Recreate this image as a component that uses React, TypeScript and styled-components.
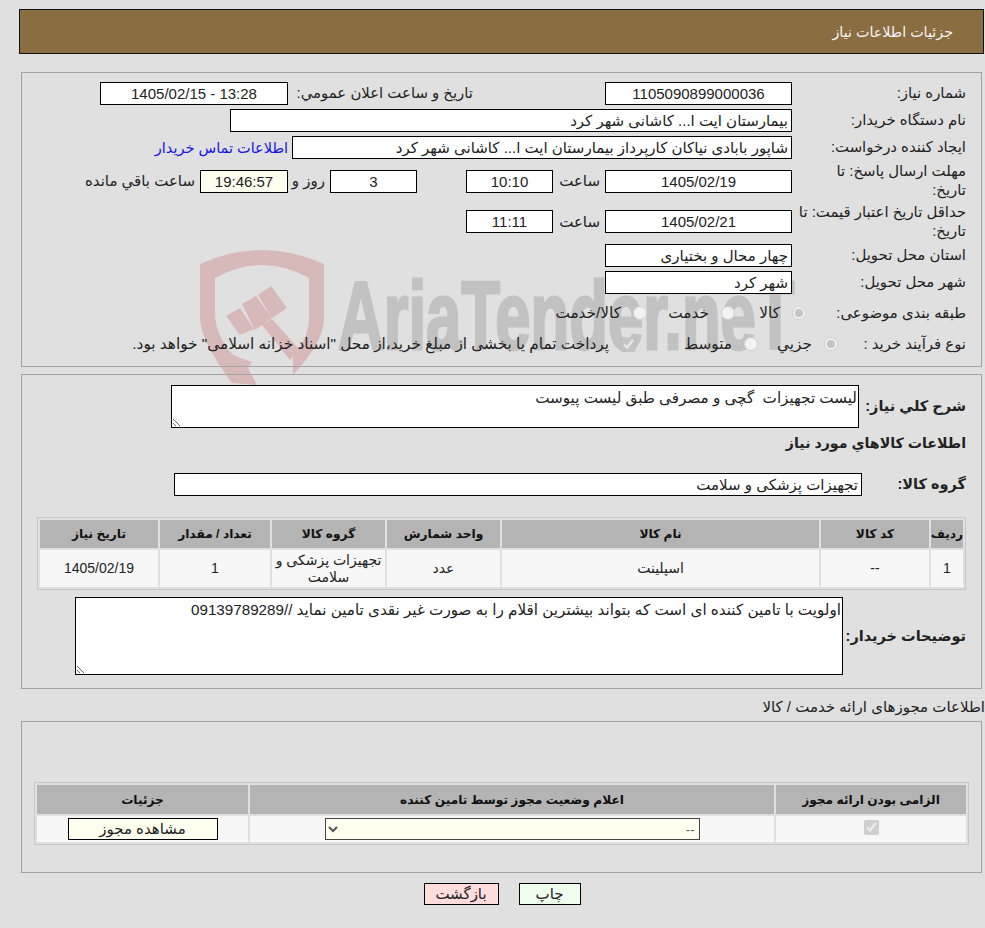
import styled, {createGlobalStyle} from "styled-components";

const FONT = `"Liberation Sans", "DejaVu Sans", sans-serif`;

const GlobalStyle = createGlobalStyle`
  html {
    background: #e0e0e0;
  }
  body {
    margin: 0;
    padding: 0;
    font-family: ${FONT};
    font-size: 15px;
    color: #222;
  }
`;

const Page = styled.div`
  direction: rtl;
  width: 985px;
  height: 928px;
  padding-top: 9px;
  box-sizing: border-box;
  overflow: hidden;
`;

const Watermark = styled.div`
  position: absolute;
  left: 200px;
  top: 250px;
  width: 600px;
  height: 140px;
  z-index: -1;
  direction: ltr;
`;

const WatermarkText = styled.span`
  position: absolute;
  left: 138px;
  top: 18px;
  font-weight: 700;
  font-size: 96px;
  line-height: 96px;
  color: #c2c2c2;
  -webkit-text-stroke: 3px #c2c2c2;
  white-space: nowrap;
  transform: scaleX(0.66);
  transform-origin: left top;
`;

const Header = styled.div`
  display: flex;
  align-items: center;
  height: 43px;
  margin: 0 1px 0 19px;
  padding-right: 30px;
  background: #8b6d42;
  border: 1px solid #111;
  color: #f4f4f4;
  font-size: 14.3px;
`;

const Panel = styled.div<{$pt: number; $px?: number; $h: number}>`
  height: ${p => p.$h}px;
  box-sizing: border-box;
  margin: 0 3px 0 21px;
  padding: ${p => p.$pt}px ${p => p.$px ?? 15}px 0;
  border: 1px solid #a2a2a2;
`;

const Row = styled.div<{$h: number}>`
  display: flex;
  align-items: center;
  height: ${p => p.$h}px;
`;

const Label = styled.div<{$w: number}>`
  flex: none;
  width: ${p => p.$w}px;
  font-size: 14.9px;
  line-height: 19px;
  white-space: nowrap;
`;

const StrongLabel = styled(Label)`
  font-weight: 700;
  font-size: 14.5px;
`;

const Heading = styled.div`
  font-weight: 700;
  font-size: 14.2px;
  height: 45px;
  line-height: 31px;
`;

const Field = styled.div<{$w: number; $digits?: boolean; $bg?: string; $gap?: number}>`
  flex: none;
  box-sizing: border-box;
  width: ${p => p.$w}px;
  height: 23px;
  margin-left: ${p => p.$gap ?? 0}px;
  padding: 0 3px;
  border: 1px solid #000;
  background: ${p => p.$bg ?? "#fff"};
  line-height: 21px;
  white-space: nowrap;
  overflow: hidden;
  text-align: ${p => (p.$digits ? "center" : "right")};
  direction: ${p => (p.$digits ? "ltr" : "rtl")};
`;

const Note = styled.span<{$w: number}>`
  flex: none;
  width: ${p => p.$w}px;
  padding-right: 5px;
  box-sizing: border-box;
  white-space: nowrap;
`;

const ContactLink = styled.a`
  margin-right: 4px;
  color: #1414e6;
  font-size: 14.5px;
  white-space: nowrap;
  cursor: pointer;
`;

const Option = styled.label<{$w?: number}>`
  display: flex;
  flex: none;
  align-items: center;
  gap: 12px;
  width: ${p => (p.$w ? `${p.$w}px` : "auto")};
  font-size: 15.3px;
  white-space: nowrap;
`;

const Radio = styled.input.attrs({type: "radio", disabled: true})`
  appearance: none;
  flex: none;
  box-sizing: border-box;
  width: 14px;
  height: 14px;
  margin: 0;
  border: 1px solid #d0d0d0;
  border-radius: 50%;
  background: #f2f2f2;

  &:checked {
    background: radial-gradient(circle, #c6c6c6 0 4px, #f2f2f2 4.5px);
  }
`;

const CheckBox = styled.input.attrs({type: "checkbox", disabled: true, checked: true, readOnly: true})`
  flex: none;
  width: 15px;
  height: 15px;
  margin: 0;
`;

const NoteArea = styled.textarea<{$w: number; $h: number}>`
  flex: none;
  box-sizing: border-box;
  width: ${p => p.$w}px;
  height: ${p => p.$h}px;
  margin: 0;
  padding: 3px 1px 2px 3px;
  border: 1px solid #000;
  border-radius: 0;
  outline: none;
  background: #fff;
  color: #222;
  font-family: ${FONT};
  font-size: 15.2px;
  line-height: 18px;
`;

const Table = styled.table`
  width: 100%;
  table-layout: fixed;
  border-collapse: separate;
  border-spacing: 2px;
  border: 1px solid #c6c6c6;
`;

const Th = styled.th<{$w?: number; $h: number}>`
  width: ${p => (p.$w ? `${p.$w}px` : "auto")};
  height: ${p => p.$h}px;
  padding: 0;
  background: #b4b4b4;
  color: #111;
  font-size: 12.2px;
  font-weight: 700;
`;

const Td = styled.td<{$h: number}>`
  height: ${p => p.$h}px;
  padding: 0;
  background: #f7f7f7;
  text-align: center;
  line-height: 17px;
  font-size: 14px;
`;

const SectionTitle = styled.div`
  height: 32px;
  line-height: 35px;
  white-space: nowrap;
`;

const StatusSelect = styled.select`
  display: block;
  box-sizing: border-box;
  width: 375px;
  height: 22px;
  margin: 0 auto;
  border: 1px solid #444;
  border-radius: 0;
  background-color: #fffff0;
  color: #555;
  font-family: ${FONT};
  font-size: 13px;
`;

const LicenseButton = styled.button`
  display: block;
  box-sizing: border-box;
  width: 150px;
  height: 22px;
  margin: 0 auto;
  padding: 0;
  border: 1px solid #000;
  background: #fffff0;
  color: #222;
  font-family: ${FONT};
  font-size: 15px;
`;

const Actions = styled.div`
  display: flex;
  justify-content: center;
  gap: 20px;
  padding: 10px 0 0 19px;
`;

const ActionButton = styled.button<{$bg: string; $w: number}>`
  box-sizing: border-box;
  width: ${p => p.$w}px;
  height: 22px;
  padding: 0;
  border: 1px solid #000;
  background: ${p => p.$bg};
  color: #222;
  font-family: ${FONT};
  font-size: 15px;
`;

const Spacer = styled.div<{$h: number}>`
  height: ${p => p.$h}px;
`;

const Shield = () => (
    <svg width="126" height="140" viewBox="0 0 126 140" fill="#d8b9b9">
        <path d="M0 14Q62 -14 124 14L124 68Q124 92 93 125L93 105Q109 88 109 68L109 28Q62 2 15 28L15 63Q15 85 33 105L52 112L48 118L57 135L32 133Q0 90 0 68Z"/>
        <path d="M26 66L40 58L54 79L40 85Z"/>
        <path d="M42 54L56 46L72 68L55 80Z"/>
        <path d="M58 45L71 36L87 58L72 68Z"/>
        <path d="M62 75L72 69L100 100L90 110Z"/>
    </svg>
);

export default function App() {
    return (
        <>
            <GlobalStyle/>
            <Watermark>
                <Shield/>
                <WatermarkText>AriaTender.neT</WatermarkText>
            </Watermark>
            <Page>
                <Header>جزئیات اطلاعات نیاز</Header>
                <Spacer $h={18}/>
                <Panel $pt={7} $h={295}>
                    <Row $h={27}>
                        <Label $w={174}>شماره نیاز:</Label>
                        <Field $w={187} $digits $gap={132}>1105090899000036</Field>
                        <Label $w={185}>تاریخ و ساعت اعلان عمومي:</Label>
                        <Field $w={188} $digits>1405/02/15 - 13:28</Field>
                    </Row>
                    <Row $h={27}>
                        <Label $w={174}>نام دستگاه خریدار:</Label>
                        <Field $w={562}>بیمارستان ایت ا... کاشانی شهر کرد</Field>
                    </Row>
                    <Row $h={27}>
                        <Label $w={174}>ایجاد کننده درخواست:</Label>
                        <Field $w={500}>شاپور بابادی نیاکان کارپرداز بیمارستان ایت ا... کاشانی شهر کرد</Field>
                        <ContactLink>اطلاعات تماس خریدار</ContactLink>
                    </Row>
                    <Row $h={40}>
                        <Label $w={174}>مهلت ارسال پاسخ: تا<br/>تاریخ:</Label>
                        <Field $w={187} $digits>1405/02/19</Field>
                        <Note $w={52}>ساعت</Note>
                        <Field $w={87} $digits $gap={49}>10:10</Field>
                        <Field $w={87} $digits>3</Field>
                        <Note $w={42}>روز و</Note>
                        <Field $w={88} $digits $bg="#fffff0">19:46:57</Field>
                        <Note $w={120}>ساعت باقي مانده</Note>
                    </Row>
                    <Row $h={41}>
                        <Label $w={174}>حداقل تاریخ اعتبار قیمت: تا<br/>تاریخ:</Label>
                        <Field $w={187} $digits>1405/02/21</Field>
                        <Note $w={52}>ساعت</Note>
                        <Field $w={87} $digits>11:11</Field>
                    </Row>
                    <Row $h={27}>
                        <Label $w={174}>استان محل تحویل:</Label>
                        <Field $w={187}>چهار محال و بختیاری</Field>
                    </Row>
                    <Row $h={27}>
                        <Label $w={174}>شهر محل تحویل:</Label>
                        <Field $w={187}>شهر کرد</Field>
                    </Row>
                    <Row $h={34}>
                        <Label $w={160}>طبقه بندی موضوعی:</Label>
                        <Option $w={71}><Radio name="kind" defaultChecked/>کالا</Option>
                        <Option $w={88}><Radio name="kind"/>خدمت</Option>
                        <Option><Radio name="kind"/>کالا/خدمت</Option>
                    </Row>
                    <Row $h={28}>
                        <Label $w={128}>نوع فرآیند خرید :</Label>
                        <Option $w={80}><Radio name="process" defaultChecked/>جزیي</Option>
                        <Option $w={122}><Radio name="process"/>متوسط</Option>
                        <Option><CheckBox/>پرداخت تمام یا بخشی از مبلغ خرید،از محل "اسناد خزانه اسلامی" خواهد بود.</Option>
                    </Row>
                </Panel>
                <Spacer $h={7}/>
                <Panel $pt={10} $h={315}>
                    <Row $h={43}>
                        <StrongLabel $w={107}>شرح کلي نياز:</StrongLabel>
                        <NoteArea $w={688} $h={43} readOnly defaultValue="لیست تجهیزات  گچی و مصرفی طبق لیست پیوست"/>
                    </Row>
                    <Heading>اطلاعات کالاهاي مورد نياز</Heading>
                    <Row $h={23}>
                        <StrongLabel $w={104}>گروه کالا:</StrongLabel>
                        <Field $w={688}>تجهیزات پزشکی و سلامت</Field>
                    </Row>
                    <Spacer $h={21}/>
                    <Table>
                        <thead>
                            <tr>
                                <Th $w={32} $h={28}>ردیف</Th>
                                <Th $w={108} $h={28}>کد کالا</Th>
                                <Th $w={317} $h={28}>نام کالا</Th>
                                <Th $w={113} $h={28}>واحد شمارش</Th>
                                <Th $w={113} $h={28}>گروه کالا</Th>
                                <Th $w={110} $h={28}>تعداد / مقدار</Th>
                                <Th $h={28}>تاریخ نیاز</Th>
                            </tr>
                        </thead>
                        <tbody>
                            <tr>
                                <Td $h={37}>1</Td>
                                <Td $h={37}>--</Td>
                                <Td $h={37}>اسپلینت</Td>
                                <Td $h={37}>عدد</Td>
                                <Td $h={37}>تجهیزات پزشکی و سلامت</Td>
                                <Td $h={37}>1</Td>
                                <Td $h={37}>1405/02/19</Td>
                            </tr>
                        </tbody>
                    </Table>
                    <Spacer $h={7}/>
                    <Row $h={78}>
                        <StrongLabel $w={123}>توضیحات خریدار:</StrongLabel>
                        <NoteArea $w={768} $h={78} readOnly defaultValue="اولویت با تامین کننده ای است که بتواند بیشترین اقلام را به صورت غیر نقدی تامین نماید //09139789289"/>
                    </Row>
                </Panel>
                <SectionTitle>اطلاعات مجوزهای ارائه خدمت / کالا</SectionTitle>
                <Panel $pt={60} $px={12} $h={152}>
                    <Table>
                        <thead>
                            <tr>
                                <Th $w={190} $h={29}>الزامی بودن ارائه مجوز</Th>
                                <Th $w={524} $h={29}>اعلام وضعیت مجوز توسط تامین کننده</Th>
                                <Th $h={29}>جزئیات</Th>
                            </tr>
                        </thead>
                        <tbody>
                            <tr>
                                <Td $h={26}><CheckBox/></Td>
                                <Td $h={26}>
                                    <StatusSelect defaultValue="--">
                                        <option>--</option>
                                    </StatusSelect>
                                </Td>
                                <Td $h={26}><LicenseButton>مشاهده مجوز</LicenseButton></Td>
                            </tr>
                        </tbody>
                    </Table>
                </Panel>
                <Actions>
                    <ActionButton $bg="#eeffee" $w={62}>چاپ</ActionButton>
                    <ActionButton $bg="#ffdddd" $w={75}>بازگشت</ActionButton>
                </Actions>
            </Page>
        </>
    );
}
